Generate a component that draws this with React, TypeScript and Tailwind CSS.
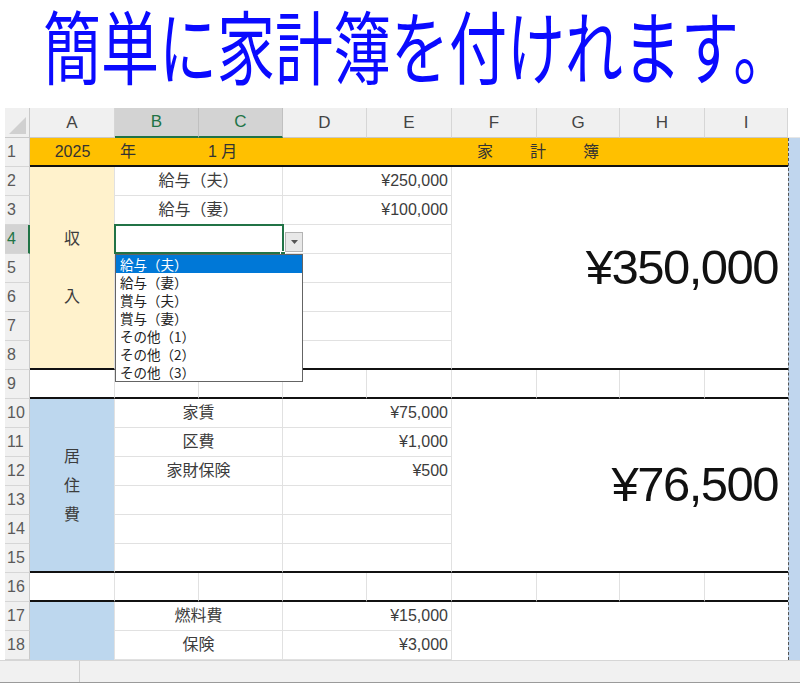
import React from 'react';

const COLS = ['A', 'B', 'C', 'D', 'E', 'F', 'G', 'H', 'I'];

const income: [string, string][] = [
  ['給与（夫）', '¥250,000'],
  ['給与（妻）', '¥100,000'],
  ['', ''],
  ['', ''],
  ['', ''],
  ['', ''],
  ['', ''],
];

const housing: [string, string][] = [
  ['家賃', '¥75,000'],
  ['区費', '¥1,000'],
  ['家財保険', '¥500'],
  ['', ''],
  ['', ''],
  ['', ''],
];

const car: [string, string][] = [
  ['燃料費', '¥15,000'],
  ['保険', '¥3,000'],
];

const options = ['給与（夫）', '給与（妻）', '賞与（夫）', '賞与（妻）', 'その他（1）', 'その他（2）', 'その他（3）'];

function RowHead({ n, active }: { n: number; active?: boolean }) {
  return (
    <div
      className={`flex items-center pl-[2px] text-[16px] border-b border-b-[#d6d6d6] ${
        active ? 'bg-[#d3d3d3] text-[#217346] border-r-2 border-r-[#217346]' : 'bg-[#f0f0f0] text-[#5a5a5a] border-r border-r-[#c9c9c9]'
      }`}
    >
      {n}
    </div>
  );
}

function Label({ text, thick }: { text: string; thick?: boolean }) {
  return (
    <div
      className={`col-span-2 flex items-center justify-center whitespace-nowrap text-[16px] text-[#3c3c3c] border-r border-r-[#e1e1e1] ${
        thick ? 'border-b-2 border-b-[#111]' : 'border-b border-b-[#e1e1e1]'
      }`}
    >
      {text}
    </div>
  );
}

function Amount({ text, thick }: { text: string; thick?: boolean }) {
  return (
    <div
      className={`col-span-2 flex items-center justify-end pr-[3px] whitespace-nowrap text-[16px] text-[#3c3c3c] border-r border-r-[#e1e1e1] ${
        thick ? 'border-b-2 border-b-[#111]' : 'border-b border-b-[#e1e1e1]'
      }`}
    >
      {text}
    </div>
  );
}

function SpacerRow({ n }: { n: number }) {
  return (
    <>
      <RowHead n={n} />
      {COLS.map((c, i) => (
        <div key={c} className={`border-b-2 border-b-[#111] ${i < 8 ? 'border-r border-r-[#e1e1e1]' : ''}`} />
      ))}
    </>
  );
}

export default function App() {
  return (
    <div className="w-[800px] h-[683px] overflow-hidden bg-white font-['Liberation_Sans','Noto_Sans_CJK_JP',sans-serif]">
      {/* title */}
      <div className="h-[108px] overflow-hidden pl-[43px] pt-[4px]">
        <div className="inline-block origin-top scale-y-[1.37] whitespace-nowrap font-['Noto_Sans_CJK_JP',sans-serif] text-[58px] leading-[58px] text-[#0a0aff]">
          簡単に家計簿を付けれます。
        </div>
      </div>

      {/* sheet */}
      <div className="relative flex">
        <div className="w-[5px] shrink-0" />
        <div className="grid grid-cols-[25px_85px_84px_84px_84px_85px_85px_83px_85px_83px_12px] grid-rows-[30px_repeat(18,29px)]">
          {/* column header */}
          <div className="relative bg-[#f0f0f0] border-r border-r-[#c9c9c9] border-b border-b-[#c9c9c9]">
            <svg className="absolute right-[3px] bottom-[3px]" width="17" height="17" viewBox="0 0 17 17">
              <polygon points="17,0 17,17 0,17" fill="#d0d0d0" />
            </svg>
          </div>
          {COLS.map(c =>
            c === 'B' || c === 'C' ? (
              <div key={c} className="flex items-center justify-center text-[17px] text-[#217346] bg-[#d3d3d3] border-r border-r-[#c0c0c0] border-b-2 border-b-[#217346]">
                {c}
              </div>
            ) : (
              <div key={c} className="flex items-center justify-center text-[17px] text-[#444] bg-[#f0f0f0] border-r border-r-[#d6d6d6] border-b border-b-[#c9c9c9]">
                {c}
              </div>
            )
          )}
          <div className="bg-white border-b border-b-[#e6e6e6]" />

          {/* column J strip */}
          <div className="col-start-11 row-start-2 row-span-18 border-l border-dashed border-l-[#555] bg-[#c0d6ee]" />

          {/* row 1 */}
          <RowHead n={1} />
          <div className="flex items-center justify-center text-[16px] text-[#333] bg-[#ffc000] border-b-2 border-b-[#111]">2025</div>
          <div className="flex items-center pl-[5px] text-[16px] text-[#333] bg-[#ffc000] border-b-2 border-b-[#111]">年</div>
          <div className="flex items-center pl-[9px] text-[16px] text-[#333] bg-[#ffc000] border-b-2 border-b-[#111]">1 月</div>
          <div className="col-span-2 bg-[#ffc000] border-b-2 border-b-[#111]" />
          <div className="col-span-4 flex items-center gap-[37px] pl-[25px] text-[16px] text-[#333] bg-[#ffc000] border-b-2 border-b-[#111]">
            <span>家</span>
            <span>計</span>
            <span>簿</span>
          </div>

          {/* rows 2-8 income */}
          {income.map(([l, a], i) => (
            <React.Fragment key={`in${i}`}>
              <RowHead n={i + 2} active={i === 2} />
              {i === 0 && (
                <div className="row-span-7 flex flex-col items-center justify-center text-[16px] leading-[29px] text-[#3c3c3c] bg-[#fff2cc] border-r border-r-[#e1e1e1] border-b-2 border-b-[#111]">
                  <span>収</span>
                  <span>&nbsp;</span>
                  <span>入</span>
                </div>
              )}
              <Label text={l} thick={i === 6} />
              <Amount text={a} thick={i === 6} />
              {i === 0 && (
                <div className="col-span-4 row-span-7 flex items-center justify-end pr-[10px] whitespace-nowrap text-[49px] tracking-[-1.5px] text-[#111] border-b-2 border-b-[#111]">
                  ¥350,000
                </div>
              )}
            </React.Fragment>
          ))}

          <SpacerRow n={9} />

          {/* rows 10-15 housing */}
          {housing.map(([l, a], i) => (
            <React.Fragment key={`ho${i}`}>
              <RowHead n={i + 10} />
              {i === 0 && (
                <div className="row-span-6 flex flex-col items-center justify-center text-[16px] leading-[29px] text-[#3c3c3c] bg-[#bdd7ee] border-r border-r-[#e1e1e1] border-b-2 border-b-[#111]">
                  <span>居</span>
                  <span>住</span>
                  <span>費</span>
                </div>
              )}
              <Label text={l} thick={i === 5} />
              <Amount text={a} thick={i === 5} />
              {i === 0 && (
                <div className="col-span-4 row-span-6 flex items-center justify-end pr-[10px] whitespace-nowrap text-[49px] tracking-[-1.5px] text-[#111] border-b-2 border-b-[#111]">
                  ¥76,500
                </div>
              )}
            </React.Fragment>
          ))}

          <SpacerRow n={16} />

          {/* rows 17-18 */}
          {car.map(([l, a], i) => (
            <React.Fragment key={`car${i}`}>
              <RowHead n={i + 17} />
              {i === 0 && <div className="row-span-2 bg-[#bdd7ee] border-r border-r-[#e1e1e1]" />}
              <Label text={l} />
              <Amount text={a} />
              {i === 0 && <div className="col-span-4 row-span-2" />}
            </React.Fragment>
          ))}
        </div>

        {/* active cell B4:C4 */}
        <div className="absolute left-[114px] top-[116px] w-[170px] h-[30px] border-2 border-[#217346]" />
        <div className="absolute left-[280px] top-[143px] w-[6px] h-[6px] bg-[#217346] border border-white" />

        {/* dropdown button */}
        <div className="absolute left-[285px] top-[124px] w-[18px] h-[20px] flex items-center justify-center bg-[#e8e8e8] border border-[#b4b4b4]">
          <svg width="7" height="4" viewBox="0 0 7 4">
            <polygon points="0,0 7,0 3.5,4" fill="#555" />
          </svg>
        </div>

        {/* dropdown list */}
        <div className="absolute left-[115px] top-[146px] w-[188px] h-[128px] bg-white border border-[#646464] font-['Noto_Sans_CJK_JP',sans-serif]">
          {options.map((o, i) => (
            <div
              key={o}
              className={`h-[18px] pl-[4px] text-[13.5px] leading-[18px] whitespace-nowrap ${
                i === 0 ? 'bg-[#0078d7] text-white' : 'text-[#222]'
              }`}
            >
              {o}
            </div>
          ))}
        </div>
      </div>

      {/* status bar */}
      <div className="flex h-[23px] bg-[#f1f1f1] border-t border-t-[#d6d6d6] border-b border-b-[#9a9a9a]">
        <div className="w-[80px] border-r border-r-[#d0d0d0]" />
      </div>
    </div>
  );
}
